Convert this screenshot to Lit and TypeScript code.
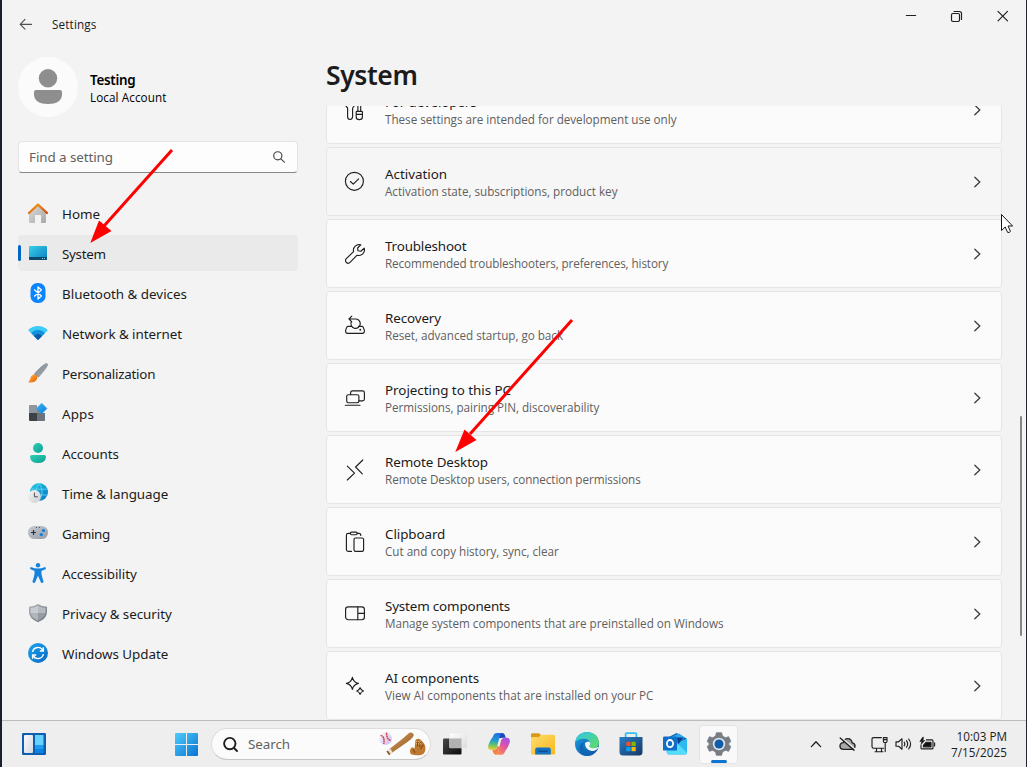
import { LitElement, html, svg, css, SVGTemplateResult } from "lit";
import { customElement, property } from "lit/decorators.js";

/** A single line of text, tracked so that it fills the given advance width. */
@customElement("fit-text")
class FitText extends LitElement {
  @property({ type: Number }) w = 0;
  static styles = css`
    :host { display: block; white-space: nowrap; }
    span { display: inline-block; }
  `;
  firstUpdated() {
    const span = this.renderRoot.querySelector("span") as HTMLElement;
    const n = (this.textContent || "").trim().length;
    const natural = span.getBoundingClientRect().width;
    if (this.w && n && natural) span.style.letterSpacing = `${(this.w - natural) / n}px`;
  }
  render() { return html`<span><slot></slot></span>`; }
}

const nav: [string, number, SVGTemplateResult][] = [
  ["Home", 38, svg`
    <path d="M2 9 L10 2 L18 9 V18.8 Q18 20 16.8 20 H13 V12.6 Q13 12 12.4 12 H7.6 Q7 12 7 12.6 V20 H2.2 Q1 20 1 18.8 V9Z" fill="url(#gHome)"/>
    <path d="M1 10 L10 1.7 L19 10" fill="none" stroke="url(#gRoof)" stroke-width="2.3" stroke-linecap="round" stroke-linejoin="round"/>`],
  ["System", 43.7, svg`
    <rect x="1" y="3" width="18" height="14" rx="1" fill="url(#gSys)"/>
    <path d="M1 14H19V16Q19 17 18 17H2Q1 17 1 16Z" fill="#0b4a6b"/>
    <rect x="14" y="15" width="1" height="1" fill="#9fd8ee"/><rect x="16" y="15" width="1" height="1" fill="#9fd8ee"/>`],
  ["Bluetooth & devices", 125, svg`
    <rect x="2.5" y="0" width="15" height="20" rx="6.8" fill="#0a84ff"/>
    <path d="M6.2 6.6 L13.4 13 L10 16 V4 L13.4 7 L6.2 13.4" fill="none" stroke="#fff" stroke-width="1.3" stroke-linejoin="round"/>`],
  ["Network & internet", 120, svg`
    <path d="M0.2 7.2 Q4.5 3 10 3 T19.8 7.2 L10 17Z" fill="#3ccbf4"/>
    <path d="M3.2 10.2 Q6 7 10 7 T16.8 10.2 L10 17Z" fill="#1190dc"/>
    <path d="M6 13 Q8 11 10 11 T14 13 L10.6 16.6 Q10 17.2 9.4 16.6Z" fill="#0c59a4"/>`],
  ["Personalization", 93.2, svg`
    <path d="M17.6 .3 Q20.2 -.4 20 2 Q19 5.2 10.4 14.8 L5.8 10.9 Q13.6 2.4 17.6 .3Z" fill="url(#gBrush)"/>
    <path d="M6.6 11.6 Q10.2 13 9 16 Q7 20.2 .6 19.5 Q.2 18.6 1.2 17.9 Q2.2 17 2.6 14.8 Q3.4 11.8 6.6 11.6Z" fill="url(#gTip)"/>`],
  ["Apps", 32, svg`
    <path d="M2 2H9V10H1V3Q1 2 2 2Z" fill="#8e979f"/><path d="M1 10H9V18H2Q1 18 1 17Z" fill="#3d4246"/>
    <path d="M9 10H17V17Q17 18 16 18H9Z" fill="#6b747c"/><path d="M9 3.5V10H15L9 5Z" fill="#808a92"/>
    <path d="M13.7 .2 L18.9 5.4 L13.7 10.8 L8.4 5.4Z" fill="url(#gBlue)" stroke="url(#gBlue)" stroke-linejoin="round" stroke-width=".6"/>`],
  ["Accounts", 56.8, svg`
    <circle cx="10" cy="5" r="5" fill="url(#gTeal)"/>
    <path d="M4 12H16Q18 12 18 14 Q17.4 20 10 20 T2 14 Q2 12 4 12Z" fill="url(#gTeal)"/>`],
  ["Time & language", 106.3, svg`
    <circle cx="11" cy="9" r="9" fill="url(#gGlobe)"/>
    <path d="M2.6 6.2H19.4M5 12H19.4M11 0Q4.8 9 11 18M11 0Q17.2 9 11 18" fill="none" stroke="#5fdcf2" stroke-width=".8"/>
    <circle cx="6.4" cy="13.5" r="6.4" fill="url(#gClock)"/>
    <path d="M6.4 9.6V13.8H9.8" fill="none" stroke="#4a5157" stroke-width="1"/>`],
  ["Gaming", 48, svg`
    <rect x="0" y="3" width="20" height="13" rx="6.3" fill="url(#gPad)"/>
    <path d="M5.5 7V12M3 9.5H8" stroke="#2f3438" stroke-width="1.2"/>
    <circle cx="15.5" cy="7.5" r="1.6" fill="#0f7fdb"/><circle cx="13.3" cy="11.6" r="1.6" fill="#0f7fdb"/>
    <path d="M8 4.5H9M11 4.5H12" stroke="#555" stroke-width="1"/>`],
  ["Accessibility", 74.7, svg`
    <circle cx="10" cy="2.2" r="2.2" fill="#1583de"/>
    <path d="M2.9 4.1 Q10 7.1 17.1 4.1 Q18.5 5 17.7 6.1 Q16 7.2 13.6 7.8 Q12.8 11 15.6 18.6 Q15 20.5 13.1 19.7 L10 12.8 L6.9 19.7 Q5 20.5 4.4 18.6 Q7.2 11 6.4 7.8 Q4 7.2 2.3 6.1 Q1.5 5 2.9 4.1Z" fill="#1583de"/>`],
  ["Privacy & security", 109.7, svg`
    <path d="M10 1 Q13.6 3.6 19 3.7 V9 Q19 15.8 10 19.2 Q1 15.8 1 9 V3.7 Q6.4 3.6 10 1Z" fill="url(#gShield)"/>
    <path d="M10 2.6 V10 H2.5 V5 Q6.4 4.8 10 2.6Z" fill="#c6ccd2"/><path d="M10 2.6 V10 H17.5 V5 Q13.6 4.8 10 2.6Z" fill="#b4bac1"/>
    <path d="M2.5 10H10V17.5Q3.4 14.8 2.5 10Z" fill="#b0b6bc"/><path d="M17.5 10H10V17.5Q16.6 14.8 17.5 10Z" fill="#959ba2"/>`],
  ["Windows Update", 106.3, svg`
    <circle cx="10" cy="10" r="10" fill="url(#gUpd)"/>
    <path d="M4.6 9 A5.5 5.5 0 0 1 15 7.6 M15.4 11 A5.5 5.5 0 0 1 5 12.4" fill="none" stroke="#fff" stroke-width="1.4"/>
    <path d="M15.4 4.3V8H11.8M4.6 15.7V12H8.2" fill="none" stroke="#fff" stroke-width="1.4"/>`],
];

const cards: [string, number, string, number, SVGTemplateResult][] = [
  ["For developers", 91.5, "These settings are intended for development use only", 291.5, svg`
    <path d="M1 7.2 L2.6 9 V17.5 Q2.6 20.5 5 20.5 T7.6 17.5 V9 L9 7.2M1 3H9V7M11.2 13 Q11.2 12.4 12 12.4 H16.6 Q17.4 12.4 17.4 13 V18 Q17.4 20.6 14.3 20.6 T11.2 18ZM11.2 15.4H17.4M12.9 12.4V5M15.7 12.4V5"/>`],
  ["Activation", 62, "Activation state, subscriptions, product key", 232.5, svg`
    <circle cx="9.4" cy="10.3" r="9"/><path d="M5.4 10.5 L8.3 13.2 L13.6 7.9"/>`],
  ["Troubleshoot", 81.5, "Recommended troubleshooters, preferences, history", 283.3, svg`
    <path d="M15.8 1.9 A5.6 5.6 0 0 0 8.6 8.6 L1.3 15.6 A2.6 2.6 0 0 0 5 19.4 L12.1 12.2 A5.6 5.6 0 0 0 19.2 5.2 L15.8 8.2 L13 7.8 L12.6 5Z"/>`],
  ["Recovery", 56, "Reset, advanced startup, go back", 178, svg`
    <path d="M6.5 11.4H3.1 Q1.9 11.4 1.6 12.6 L.6 15.4 Q.4 18.3 2.6 18.3 H17.4 Q19.6 18.3 19.4 15.4 L18.4 12.6 Q18.1 11.4 16.9 11.4 H13.5"/>
    <path d="M4 4 H10 A4.7 4.7 0 1 1 6.4 6.5 M6.8 1.2 L4 4 L6.8 6.8"/><circle cx="15.3" cy="14.8" r=".4"/>`],
  ["Projecting to this PC", 126, "Permissions, pairing PIN, discoverability", 214.3, svg`
    <path d="M5.6 7.6 V5.7 Q5.6 3.8 7.5 3.8 H17.5 Q19.4 3.8 19.4 5.7 V12 Q19.4 13.9 17.5 13.9 H14"/>
    <rect x="1.7" y="7.7" width="12.2" height="8" rx="1.6"/><path d="M.3 18.2H15"/>`],
  ["Remote Desktop", 103, "Remote Desktop users, connection permissions", 255.7, svg`
    <path d="M2.3 7.2 L9.5 14.2 L2.3 21 M17.8 1 L10.6 8 L17.3 14.8"/>`],
  ["Clipboard", 60.3, "Cut and copy history, sync, clear", 173.8, svg`
    <path d="M6.5 20.4 H3.2 Q1.4 20.4 1.4 18.6 V4.2 Q1.4 2.4 3.2 2.4 H5.4 M12.2 2.4 H14 Q15.8 2.4 15.8 4.4"/>
    <rect x="5.4" y="1.1" width="6.8" height="2.6" rx="1.2"/><rect x="9" y="7" width="9.6" height="13.4" rx="1.6"/>`],
  ["System components", 125, "Manage system components that are preinstalled on Windows", 338.5, svg`
    <rect x=".6" y="3.9" width="18.8" height="12.8" rx="2.6"/><path d="M12.8 4V16.6M12.8 10.4H19.4"/>`],
  ["AI components", 94, "View AI components that are installed on your PC", 268.5, svg`
    <path d="M7.4 2.3 Q8.4 7.2 13.4 8.4 Q8.4 9.6 7.4 14.5 Q6.4 9.6 1.4 8.4 Q6.4 7.2 7.4 2.3Z"/>
    <path d="M15.1 12.7 Q15.9 15.2 18.5 16 Q15.9 16.8 15.1 19.4 Q14.3 16.8 11.7 16 Q14.3 15.2 15.1 12.7Z"/>`],
];

const lin = (id: string, a: string, b: string) => svg`
  <linearGradient id=${id} x1="0" y1="0" x2="1" y2="1"><stop offset="0" stop-color=${a}/><stop offset="1" stop-color=${b}/></linearGradient>`;

const defs = svg`<defs>
  ${lin("gHome", "#dcdcdc", "#a8a8a8")}${lin("gRoof", "#f9a01b", "#d1490c")}${lin("gSys", "#35d2e6", "#0f7cc4")}
  ${lin("gBrush", "#7d848b", "#a9afb5")}${lin("gTip", "#ffb52e", "#e8590c")}${lin("gBlue", "#34b8f8", "#0f78d8")}
  ${lin("gTeal", "#2bd0b8", "#0f9f90")}${lin("gGlobe", "#27cfe4", "#0a6fc6")}${lin("gClock", "#f7f7f7", "#cccccc")}
  ${lin("gPad", "#c6cbd2", "#979ca5")}${lin("gShield", "#a9afb5", "#6e747a")}${lin("gUpd", "#1ba5ee", "#0a68c4")}
  ${lin("gWin", "#4fcdfb", "#0873d3")}${lin("gDark", "#484848", "#0c0c0c")}${lin("gGlass", "#ffffff", "#dcdcdc")}
  ${lin("gWid", "#fafafa", "#d4dae2")}${lin("gFold", "#ffdc6e", "#f7b91c")}${lin("gStore", "#2680c8", "#1a3564")}
  ${lin("gEdgeA", "#2fc3ee", "#63de5c")}${lin("gEdgeB", "#1aa2e2", "#0b4ca0")}
  ${lin("gBat", "#d59a55", "#8f5a26")}${lin("gBall", "#ffffff", "#c9b6f0")}
  <linearGradient id="gCopA" x1=".4" y1="0" x2=".3" y2="1"><stop offset="0" stop-color="#1f6fe0"/><stop offset=".4" stop-color="#2196d8"/><stop offset=".65" stop-color="#4fbf7a"/><stop offset="1" stop-color="#f0d02c"/></linearGradient>
  <linearGradient id="gCopB" x1=".8" y1="0" x2=".3" y2="1"><stop offset="0" stop-color="#a24df0"/><stop offset=".5" stop-color="#e0579e"/><stop offset="1" stop-color="#fb8a50"/></linearGradient>
</defs>`;

const icon = (cls: string, w: number, h: number, body: SVGTemplateResult) =>
  html`<svg class=${cls} width=${w} height=${h} viewBox="0 0 ${w} ${h}">${defs}${body}</svg>`;
const line = (w: number, h: number, body: SVGTemplateResult) =>
  html`<svg class="line" width=${w} height=${h} viewBox="0 0 ${w} ${h}">${body}</svg>`;

@customElement("app-root")
class AppRoot extends LitElement {
  static styles = css`
    :host { display: block; width: 1027px; height: 767px; overflow: hidden; position: relative; box-sizing: border-box;
      background: #f3f3f3; border-left: 2px solid #1a2030; border-right: 1px solid #232334; color: #1b1b1b;
      font-family: "Noto Sans", "Open Sans", sans-serif; font-size: 13.4px; }
    * { box-sizing: border-box; }
    svg { display: block; flex: none; overflow: visible; }
    .line { fill: none; stroke: #1f1f1f; stroke-width: 1.15; stroke-linejoin: round; stroke-linecap: round; }
    .chev { stroke: #3a3a3a; stroke-width: 1.25; }
    .bold { stroke-width: 1.9; }
    .mid { stroke-width: 1.35; }
    .page { display: flex; flex-direction: column; height: 767px; }
    .titlebar { height: 47px; flex: none; display: flex; align-items: flex-start; padding-left: 17px; }
    .titlebar .back { margin: 17px 19px 0 0; }
    .titlebar fit-text { font-family: "Open Sans", sans-serif; font-size: 11.7px; line-height: 18px; margin-top: 15px; flex: 1; }
    .winbtns { display: flex; gap: 33px; margin: 9px 17px 0 0; }
    .body { flex: 1; min-height: 0; display: flex; }
    .side { width: 324px; flex: none; padding: 10px 28px 0 16px; }
    .user { display: flex; gap: 12px; height: 60px; color: #000; }
    .user .names { padding-top: 13px; }
    .user .n { font-size: 13.4px; font-weight: 600; line-height: 20px; }
    .user .a { font-family: "Open Sans", sans-serif; font-size: 11.7px; line-height: 15px; }
    .find { margin-top: 24px; height: 32px; background: #fdfdfd; border: 1px solid #e3e3e3; border-bottom-color: #868686;
      border-radius: 4px; padding: 0 12px 0 10px; display: flex; align-items: center; justify-content: space-between; color: #616161; }
    .nav { margin-top: 22px; display: flex; flex-direction: column; gap: 4px; }
    .item { height: 36px; border-radius: 4px; display: flex; align-items: center; padding-left: 10px; gap: 14px; position: relative; }
    .item fit-text { line-height: 20px; padding-top: 2px; }
    .sel { background: #eaeaea; }
    .sel::before { content: ""; position: absolute; left: 0; top: 10px; width: 3px; height: 16px; border-radius: 2px; background: #0067c0; }
    .main { flex: 1; display: flex; flex-direction: column; min-width: 0; }
    h1 { margin: 0; height: 59px; flex: none; font-size: 26.5px; font-weight: 600; line-height: 36px; padding-top: 10px; }
    .scroll { flex: 1; min-height: 0; overflow: hidden; display: flex; }
    .cards { width: 676px; margin-top: -31px; display: flex; flex-direction: column; gap: 3px; }
    .card { height: 69px; flex: none; background: #fbfbfb; border: 1px solid #e5e5e5; border-radius: 4px;
      display: flex; align-items: center; padding: 0 20px 0 18px; }
    .card.hover { background: #f6f6f6; }
    .card .t { flex: 1; padding: 1px 0 0 20px; }
    .card .a { line-height: 19px; }
    .card .b { font-family: "Open Sans", sans-serif; font-size: 11.7px; line-height: 16px; margin: -1px 0 1px; color: #5f5f5f; }
    .bar { margin: 310px 0 0 18px; width: 2px; height: 220px; border-radius: 1px; background: #858585; }
    .task { height: 47px; flex: none; border-top: 1px solid #bcbcbc; background: #eeeeee; display: flex; align-items: center; padding: 0 19px 0 20px; }
    .start { margin-left: 129px; }
    .search { margin: 0 12px 0 13px; width: 220px; height: 32px; border-radius: 16px; background: #fbfbfb; border: 1px solid #dcdcdc;
      border-bottom-color: #c6c6c6; display: flex; align-items: center; padding: 0 4px 0 11px; gap: 10px; color: #616161; }
    .search fit-text { flex: 1; }
    .apps { display: flex; gap: 20px; align-items: center; }
    .active { width: 39px; height: 39px; margin-left: -8px; background: #f9f9f9; border: 1px solid #e4e4e4; border-radius: 4px; position: relative;
      display: flex; align-items: center; justify-content: center; }
    .active::after { content: ""; position: absolute; left: 11px; bottom: 0; width: 16px; height: 3px; border-radius: 2px; background: #0f73d0; }
    .tray { margin-left: auto; display: flex; align-items: center; }
    .cloud { margin-left: 17px; }
    .net { margin-left: 15px; }
    .vol, .bat { margin-left: 7px; }
    .clock { font-family: "Open Sans", sans-serif; font-size: 11.7px; line-height: 16px; display: flex; flex-direction: column; align-items: flex-end; margin-left: 15px; }
    .over { position: absolute; left: -2px; top: 0; pointer-events: none; }
  `;

  render() {
    const chev = html`<svg class="line chev" width="8" height="12" viewBox="0 0 8 12"><path d="M1.8 1.2 L6.8 6 L1.8 10.8"/></svg>`;
    return html`
      <div class="page">
        <div class="titlebar">
          <div class="back">${line(14, 14, svg`<path d="M1.2 7.3H12.6M6 2.4 L1.2 7.3 L6 12.2" stroke="#505050"/>`)}</div>
          <fit-text w="44.5">Settings</fit-text>
          <div class="winbtns">
            ${line(13, 13, svg`<path d="M2.3 6.5H11.7"/>`)}
            ${line(13, 13, svg`<rect x="1.5" y="4.5" width="8" height="8" rx="1.4"/><path d="M4 2.5H9.4Q11.5 2.5 11.5 4.6V10.4"/>`)}
            ${line(13, 13, svg`<path d="M2 2.3 L11.5 11.8M11.5 2.3 L2 11.8"/>`)}
          </div>
        </div>
        <div class="body">
          <div class="side">
            <div class="user">
              <svg width="60" height="60"><circle cx="30" cy="30" r="30" fill="#fbfbfb"/><circle cx="30" cy="21.3" r="9.2" fill="#8e8e8e"/>
                <path d="M18 33H42Q44 33 44 35V38Q43 47 30 47T16 38V35Q16 33 18 33Z" fill="#8e8e8e"/></svg>
              <div class="names"><fit-text class="n" w="45.5">Testing</fit-text><fit-text class="a" w="76.5">Local Account</fit-text></div>
            </div>
            <div class="find"><fit-text w="84">Find a setting</fit-text>
              ${line(12, 12, svg`<circle cx="4.8" cy="4.8" r="4.1" stroke="#444"/><path d="M7.8 7.8 L11.4 11.2" stroke="#444"/>`)}</div>
            <div class="nav">${nav.map(([t, w, g]) => html`
              <div class="item ${t === "System" ? "sel" : ""}">${icon("", 20, 20, g)}<fit-text .w=${w}>${t}</fit-text></div>`)}</div>
          </div>
          <div class="main">
            <h1><fit-text w="91.5">System</fit-text></h1>
            <div class="scroll">
              <div class="cards">${cards.map(([t, w, s, sw, g]) => html`
                <div class="card ${t === "Activation" ? "hover" : ""}">${line(20, 21, g)}
                  <div class="t"><fit-text class="a" .w=${w}>${t}</fit-text><fit-text class="b" .w=${sw}>${s}</fit-text></div>${chev}</div>`)}</div>
              <div class="bar"></div>
            </div>
          </div>
        </div>
        <div class="task">
          ${icon("", 24, 22, svg`<rect width="24" height="22" rx="1.2" fill="#0f5fae"/><rect x="2" y="2" width="9" height="18" rx="1" fill="url(#gWid)"/>
            <path d="M13 2H21.5V12H13Z" fill="#66d3ff"/><path d="M13 12H21.5V16H13Z" fill="#1f9cf0"/><path d="M13 16H21.5V20H13Z" fill="#0c84e6"/>`)}
          <div class="start">${icon("", 23, 23, svg`<path d="M1 0H11V11H0V1Q0 0 1 0ZM12 0H22Q23 0 23 1V11H12ZM0 12H11V23H1Q0 23 0 22ZM12 12H23V22Q23 23 22 23H12Z" fill="url(#gWin)"/>`)}</div>
          <div class="search">
            <svg class="line bold" width="15" height="15"><circle cx="6.8" cy="6.6" r="5.7"/><path d="M11 11 L14 14"/></svg>
            <fit-text w="42">Search</fit-text>
            ${icon("", 47, 24, svg`
              <circle cx="6.5" cy="6.5" r="6.4" fill="url(#gBall)"/><path d="M1.6 3.4Q6 4.6 4.8 12M7.6 .8Q7.4 7.4 12 8.6" fill="none" stroke="#d23f3f" stroke-width="1.5" stroke-dasharray="1.8 .5"/>
              <path d="M30.4 .8 Q34 -.6 34.8 3 Q34.8 5.4 28 10.2 L12.3 21.3 L9.8 17.6 L23.5 6.8Z" fill="url(#gBat)"/>
              <path d="M13.6 20.6 L10.4 22.8 L8.4 19.4 L11.4 16.5Z" fill="#e8e2da"/><path d="M8 19 L10.8 22.6" stroke="#8a5a2c" stroke-width="1.8"/>
              <path d="M36.4 8.2 Q39.5 5.4 42.5 8.4 Q46.6 12.4 46.4 16.4 Q46.6 20.5 43.4 22.4 Q38 24.4 31.8 22.2 Q29.8 18.6 32.6 15.6 Q34.8 15 35.6 16.8Z" fill="#bd7930"/>
              <path d="M38.8 8.6 L38.5 14.2M41.8 9.4 L40.6 15M44.4 12.6 L41.5 17M33.8 17.5 L36.2 20.6" stroke="#7d4715" stroke-width="1.1"/><path d="M36.6 9.5H42M37 11.8H42" stroke="#e9c48c" stroke-dasharray="1 1"/>`)}
          </div>
          <div class="apps">
            ${icon("", 24, 24, svg`<rect x="0" y="6.5" width="18.5" height="16" rx="1" fill="url(#gDark)"/><rect x="6.5" y="1" width="17.5" height="15" rx="1" fill="url(#gGlass)" stroke="#e2e2e2" stroke-width=".4"/><rect x="6.5" y="6.5" width="12" height="9.5" fill="#b2b2b2"/>`)}
            ${icon("", 24, 24, svg`
              <path d="M12 6.2 L12.4 1 H15 Q17.4 1 18.2 4 L18.7 5.7 H15.8Z" fill="#1d45b8"/>
              <path d="M6 4.4 Q7 1 10.2 1 H15.2 Q13.4 1.4 12.8 4 L10.2 14.2 Q9.2 18 6.6 18 H4.4 Q.6 18 1.2 13.5 Q2.6 8.6 6 4.4Z" fill="url(#gCopA)"/>
              <path d="M18 19.4 Q17 22.8 13.8 22.8 H8.8 Q10.6 22.4 11.2 19.8 L13.8 9.4 Q14.8 5.8 17.4 5.8 H19.6 Q23.4 5.8 22.8 10.3 Q21.4 15.2 18 19.4Z" fill="url(#gCopB)"/>
              <path d="M5.4 18 H6.8 Q9.4 18 10.4 14.2 L12.6 14.2 L11.2 19.8 Q10.6 22.8 8.8 22.8 Q6.8 22.8 5.8 19.6Z" fill="#f5804a"/>`)}
            ${icon("", 24, 24, svg`<path d="M0 2.4Q0 1.2 1.2 1.2H8L10.2 3.2 8 5.8H0Z" fill="#d99a18"/><path d="M0 5.2H7.6L10.3 2.8H22.8Q24 2.8 24 4V21.2Q24 22.4 22.8 22.4H1.2Q0 22.4 0 21.2Z" fill="url(#gFold)"/>
              <path d="M4.2 22.4V17.6Q4.2 15.6 6.2 15.6H17.8Q19.8 15.6 19.8 17.6V22.4Z" fill="#1371c4"/><path d="M8 19.2H16.2" stroke="#0e4d92" stroke-width="1.6" stroke-linecap="round"/>`)}
            ${icon("", 24, 24, svg`<circle cx="12" cy="12" r="12" fill="url(#gEdgeB)"/>
              <path d="M.3 10 Q2 0 12.4 0 Q23.8 .8 24 10.6 Q23.8 16 18 16.2 Q13.6 16 14.6 13.6 Q15.8 12.8 15.2 10.6 Q13.8 7 9.4 6.8 Q3.6 6.6 .3 10Z" fill="url(#gEdgeA)"/>
              <path d="M9.4 10.2 Q7 13.4 8.8 17.6 Q12 23.4 19.8 20.9 Q15.6 25 9.8 23.8 Q4.4 21 4.6 15.4 Q5.6 10.6 9.4 10.2Z" fill="#1163b4"/>
              <path d="M10 11.2 Q12.8 8.2 15.2 10.6 Q15.8 12.8 14.6 13.6 Q13.6 16 18 16.2 Q21.4 16.2 23.3 14.4 L23.4 15.2 Q21.4 19.4 16.4 19 Q10 17.8 10 11.2Z" fill="#f0f7fb"/>`)}
            ${icon("", 24, 24, svg`<path d="M6.6 6V2.2Q6.6 1.1 7.7 1.1H16.3Q17.4 1.1 17.4 2.2V6" fill="none" stroke="#35bff2" stroke-width="1.8"/><path d="M.5 5H23.5V20Q23.5 23.6 20 23.6H4Q.5 23.6 .5 20Z" fill="url(#gStore)"/>
              <rect x="7.3" y="9.8" width="4.2" height="4.2" fill="#f25022"/><rect x="12.5" y="9.8" width="4.2" height="4.2" fill="#7fba00"/><rect x="7.3" y="15" width="4.2" height="4.2" fill="#00a4ef"/><rect x="12.5" y="15" width="4.2" height="4.2" fill="#ffb900"/>`)}
            ${icon("", 24, 24, svg`<path d="M4 6 L13.5 .9 L23.6 6.6 V15 L4 18Z" fill="#1764b0"/><path d="M9 4.6 L16 1.4 L22 5.5 L14 12Z" fill="#2aa8ea"/>
              <path d="M14 11 L24 6.6 V20.4Q24 22.4 22 22.4H6Q3.6 22.4 3.6 19Z" fill="#2cb9f2"/><path d="M14 11 L23.8 20.8 Q23.4 22.4 22 22.4H6Q3.6 22.4 3.6 19 L10 17Z" fill="#55dcfa"/><path d="M14 5.5H20.5L15 12.5Z" fill="#0b3f8c"/>
              <rect x="0" y="4.6" width="14" height="14" rx="1.2" fill="#0f6fc8"/><ellipse cx="7" cy="11.6" rx="3.1" ry="3.6" fill="none" stroke="#fff" stroke-width="1.8"/>`)}
            <div class="active">${icon("", 24, 24, svg`
              <path d="M9.3 .6 H14.7 L15.7 4 L18.4 5.5 L21.7 4.6 L24 9.2 L21.6 12 L24 14.8 L21.7 19.4 L18.4 18.5 L15.7 20 L14.7 23.4 H9.3 L8.3 20 L5.6 18.5 L2.3 19.4 L0 14.8 L2.4 12 L0 9.2 L2.3 4.6 L5.6 5.5 L8.3 4Z" fill="#767d84" stroke="#767d84" stroke-width=".4" stroke-linejoin="round"/>
              <circle cx="12" cy="12" r="6.2" fill="#dfe5ea"/><circle cx="12" cy="12" r="4.5" fill="#0f5ca8"/>`)}</div>
          </div>
          <div class="tray">
            <svg class="line mid" width="12" height="8"><path d="M1.4 6.6 L6 1.8 L10.6 6.6"/></svg>
            <svg class="line mid cloud" width="17" height="14"><path d="M4.4 12.4Q1 12.2 1 9T4.4 5.6Q5.2 1.6 8.8 1.6T13.2 5.8Q16 6.2 16 9T13 12.4Z" fill="#a8a8a8"/><path d="M2.8 1 L16 12" stroke="#eee" stroke-width="1.4"/><path d="M1.2 1 L15 13.2"/></svg>
            <svg class="line net" width="17" height="17"><path d="M10.4 1.6H2.6Q1 1.6 1 3.2V10.6Q1 12.2 2.6 12.2H12.6M5.5 12.2V15.5M10.5 12.2V15.5M4 15.7H12"/><path d="M12.4 1.6H16V5.4Q16 6.6 14.2 6.6T12.4 5.4ZM14.2 6.6V15.6M12.4 3.6H16"/></svg>
            <svg class="line vol" width="17" height="14"><path d="M1 4.8H3.6L7 1.8V12.2L3.6 9.2H1ZM9.2 5.2Q10.6 7 9.2 8.8M11.4 3.6Q14 7 11.4 10.4M13.6 2Q17.6 7 13.6 12"/></svg>
            <svg class="line bat" width="17" height="14"><path d="M7.4 2.9H13Q14 2.9 14 3.9V10.9Q14 11.9 13 11.9H3Q2 11.9 2 10.9V8.4"/><path d="M7.2 5.2H12V9.8H4.4V8.4Z" fill="#111"/><path d="M15.6 5.8V9"/><path d="M3.4 .6 L.8 4.6H2.8L2 7.6 L5.8 3.4H3.8L4.6 .6Z" fill="#111" stroke-width=".6"/></svg>
            <div class="clock"><fit-text w="50.5">10:03 PM</fit-text><fit-text w="56">7/15/2025</fit-text></div>
          </div>
        </div>
      </div>
      <svg class="over" width="1027" height="767">
        <g stroke="#f00" stroke-width="3" fill="#f00">
          <path d="M172 150 L104 226"/><path d="M90.3 243 L99 220.5 L111.5 231Z" stroke="none"/>
          <path d="M572 320 L470 434"/><path d="M455.3 452 L464.5 429.5 L476.5 440Z" stroke="none"/>
        </g>
        <path d="M1001.5 214.5 V230.5 L1005.2 227 L1007.6 232.4 H1009.6 L1010.4 231.2 L1008 226 H1012.6Z" fill="#fff" stroke="#16161f" stroke-width="1"/>
      </svg>`;
  }
}
